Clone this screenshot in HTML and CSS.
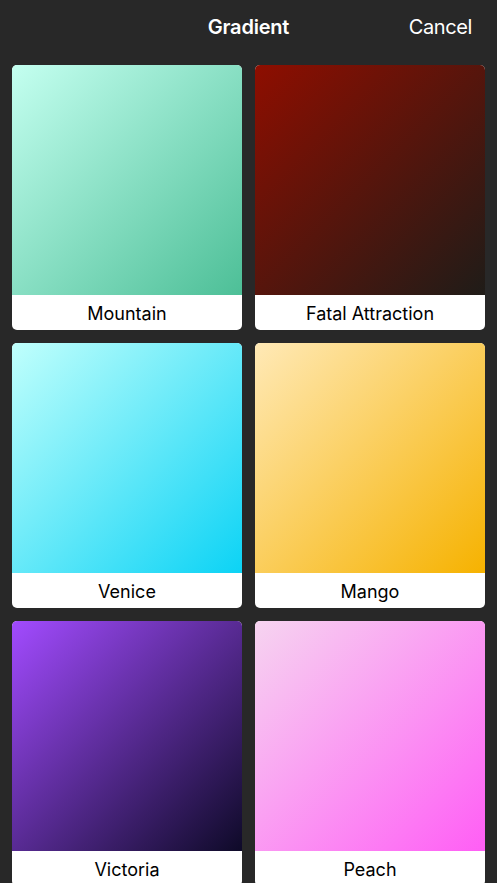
FILE: index.html
```html
<!DOCTYPE html>
<html>
<head>
<meta charset="utf-8">
<link rel="stylesheet" href="styles.css">
</head>
<body>
<div class="screen">
  <header class="topbar">
    <div class="title">Gradient</div>
    <div class="cancel">Cancel</div>
  </header>
  <main class="grid">
    <div class="card"><div class="swatch mountain"></div><div class="label">Mountain</div></div>
    <div class="card"><div class="swatch fatal"></div><div class="label">Fatal Attraction</div></div>
    <div class="card"><div class="swatch venice"></div><div class="label">Venice</div></div>
    <div class="card"><div class="swatch mango"></div><div class="label">Mango</div></div>
    <div class="card"><div class="swatch victoria"></div><div class="label">Victoria</div></div>
    <div class="card"><div class="swatch peach"></div><div class="label">Peach</div></div>
  </main>
</div>
</body>
</html>
```
FILE: styles.css
```css
html, body {
  margin: 0;
  padding: 0;
  background: #282828;
  height: 100%;
  overflow: hidden;
}
.screen {
  font-family: Inter, "Noto Sans", sans-serif;
  width: 497px;
}
.topbar {
  position: relative;
  height: 65px;
  display: flex;
  align-items: flex-start;
  justify-content: center;
  color: #fff;
}
.title {
  margin-top: 15px;
  font-size: 20px;
  font-weight: 600;
  letter-spacing: -0.2px;
}
.cancel {
  position: absolute;
  right: 25px;
  top: 15px;
  font-size: 20px;
  font-weight: 400;
  letter-spacing: -0.4px;
}
.grid {
  display: grid;
  grid-template-columns: 230px 230px;
  gap: 13px;
  padding: 0 12px;
}
.card {
  border-radius: 5px;
  overflow: hidden;
  background: #fff;
  display: flex;
  flex-direction: column;
}
.swatch {
  height: 230px;
}
.label {
  height: 35px;
  padding-top: 2px;
  box-sizing: border-box;
  display: flex;
  align-items: center;
  justify-content: center;
  font-size: 18px;
  font-weight: 400;
  color: #000;
  letter-spacing: 0;
}
.mountain { background: linear-gradient(135deg, #c4fff0 0%, #4dbf97 100%); }
.fatal { background: linear-gradient(135deg, #8e0e00 0%, #1f1c18 100%); }
.venice { background: linear-gradient(135deg, #c0fffc 0%, #0cd3f5 100%); }
.mango { background: linear-gradient(135deg, #ffe9b6 0%, #f6b200 100%); }
.victoria { background: linear-gradient(135deg, #a24bff 0%, #0e0a28 100%); }
.peach { background: linear-gradient(135deg, #f6d4f0 0%, #ff5ef5 100%); }
```
